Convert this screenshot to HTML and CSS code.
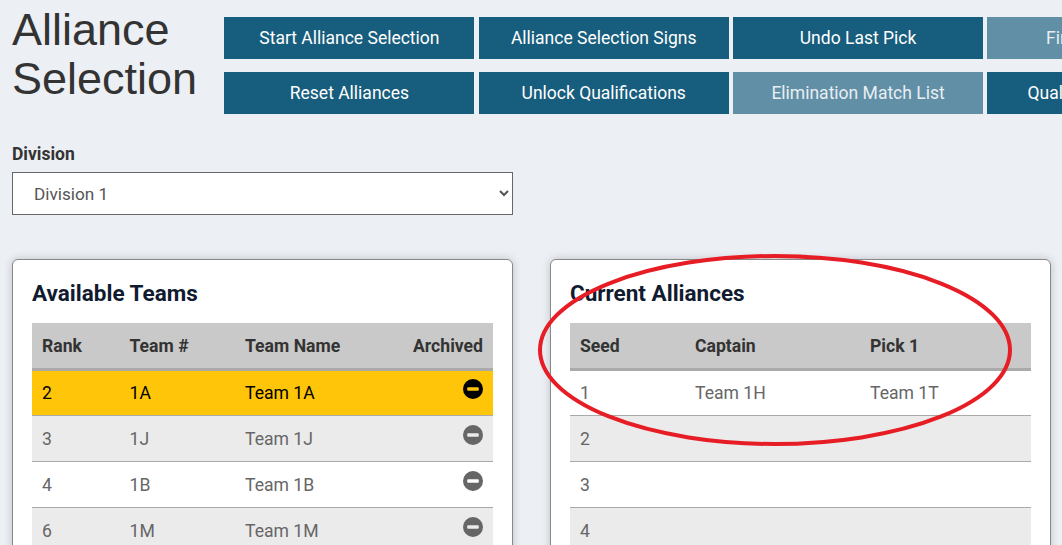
FILE: index.html
```html
<!DOCTYPE html>
<html lang="en">
<head>
<meta charset="utf-8">
<title>Alliance Selection</title>
<link rel="stylesheet" href="styles.css">
</head>
<body>
<header class="top">
  <h1 class="title">Alliance Selection</h1>
  <div class="actions">
    <a class="btn">Start Alliance Selection</a>
    <a class="btn">Alliance Selection Signs</a>
    <a class="btn">Undo Last Pick</a>
    <a class="btn off">Finals Match List</a>
    <a class="btn">Reset Alliances</a>
    <a class="btn">Unlock Qualifications</a>
    <a class="btn off">Elimination Match List</a>
    <a class="btn">Qualification Matches</a>
  </div>
</header>
<div class="field">
  <label class="field-label" for="division">Division</label>
  <select class="field-select" id="division"><option>Division 1</option></select>
</div>
<main class="cards">
  <section class="card">
    <h2 class="card-title">Available Teams</h2>
    <table class="data teams">
      <thead><tr><th>Rank</th><th>Team #</th><th>Team Name</th><th class="end">Archived</th></tr></thead>
      <tbody>
        <tr class="active"><td>2</td><td>1A</td><td>Team 1A</td><td class="end"><svg class="minus" viewBox="0 0 20 20"><path fill-rule="evenodd" d="M10 0a10 10 0 1 1 0 20a10 10 0 1 1 0-20zM5.2 8.2a1 1 0 0 0-1 1v1.6a1 1 0 0 0 1 1h9.6a1 1 0 0 0 1-1v-1.600a1 1 0 0 0-1-1z"/></svg></td></tr>
        <tr><td>3</td><td>1J</td><td>Team 1J</td><td class="end"><svg class="minus" viewBox="0 0 20 20"><path fill-rule="evenodd" d="M10 0a10 10 0 1 1 0 20a10 10 0 1 1 0-20zM5.2 8.2a1 1 0 0 0-1 1v1.6a1 1 0 0 0 1 1h9.6a1 1 0 0 0 1-1v-1.600a1 1 0 0 0-1-1z"/></svg></td></tr>
        <tr><td>4</td><td>1B</td><td>Team 1B</td><td class="end"><svg class="minus" viewBox="0 0 20 20"><path fill-rule="evenodd" d="M10 0a10 10 0 1 1 0 20a10 10 0 1 1 0-20zM5.2 8.2a1 1 0 0 0-1 1v1.6a1 1 0 0 0 1 1h9.6a1 1 0 0 0 1-1v-1.600a1 1 0 0 0-1-1z"/></svg></td></tr>
        <tr><td>6</td><td>1M</td><td>Team 1M</td><td class="end"><svg class="minus" viewBox="0 0 20 20"><path fill-rule="evenodd" d="M10 0a10 10 0 1 1 0 20a10 10 0 1 1 0-20zM5.2 8.2a1 1 0 0 0-1 1v1.6a1 1 0 0 0 1 1h9.6a1 1 0 0 0 1-1v-1.600a1 1 0 0 0-1-1z"/></svg></td></tr>
      </tbody>
    </table>
  </section>
  <section class="card">
    <h2 class="card-title">Current Alliances</h2>
    <table class="data alliances">
      <thead><tr><th>Seed</th><th>Captain</th><th>Pick 1</th></tr></thead>
      <tbody>
        <tr><td>1</td><td>Team 1H</td><td>Team 1T</td></tr>
        <tr><td>2</td><td></td><td></td></tr>
        <tr><td>3</td><td></td><td></td></tr>
        <tr><td>4</td><td></td><td></td></tr>
      </tbody>
    </table>
  </section>
</main>
<svg class="annotation" viewBox="0 0 1062 545" aria-hidden="true">
  <ellipse cx="775" cy="350" rx="235" ry="94"/>
</svg>
</body>
</html>
```
FILE: styles.css
```css
* { box-sizing: border-box; }
html, body { height: 545px; overflow: hidden; }
body {
  margin: 0;
  padding: 5px 0 0 12px;
  background: #eceff4;
  font-family: Roboto, "Liberation Sans", sans-serif;
  color: #333;
  position: relative;
}
.top { display: flex; align-items: flex-start; width: 1400px; }
.title {
  margin: 0;
  width: 212.400px;
  flex: none;
  font: 400 45px/49px "Liberation Sans", Arial, sans-serif;
  color: #333;
}
.actions {
  display: grid;
  grid-template-columns: repeat(4, 250px);
  gap: 13px 4.330px;
  margin-top: 12px;
}
.btn {
  height: 42px;
  display: flex;
  align-items: center;
  justify-content: center;
  background: #175d7d;
  color: #fff;
  font-size: 17.500px;
  white-space: nowrap;
}
.btn.off { background: #618fa6; color: #e8eef2; }
.field { margin-top: 30px; width: 501px; }
.field-label { display: block; font-size: 17.500px; font-weight: 700; line-height: 20px; color: #333; }
.field-select {
  display: block;
  width: 100%;
  height: 43px;
  margin-top: 8px;
  padding: 0 17px;
  border: 1px solid #666;
  border-radius: 0;
  background-color: #fff;
  color: #555;
  font: 400 17.200px Roboto, sans-serif;
}
.cards { display: flex; gap: 37px; margin-top: 44px; }
.card {
  flex: none;
  width: 501px;
  height: 400px;
  padding: 20px 19px;
  background: #fff;
  border: 1px solid #888;
  border-radius: 6px;
  box-shadow: 0 0 8px rgba(0, 0, 0, .2);
}
.card-title { margin: 0 0 17px; font-size: 22.500px; line-height: 26px; font-weight: 700; color: #101b30; }
.data { width: 461px; border-collapse: collapse; table-layout: fixed; font-size: 17.600px; }
.data th, .data td { padding: 0 10px; text-align: left; }
.data th { height: 46px; padding-top: 2px; background: #c9c9c9; border-bottom: 3px solid #aaa; color: #333; font-weight: 700; }
.data td { height: 46px; padding-top: 1px; border-bottom: 1px solid #aaa; color: #666; }
.data tbody tr:nth-child(even) td { background: #ebebeb; }
.data .end { text-align: right; }
.data tr.active td { background: #ffc609; color: #000; }
.teams th:nth-child(1) { width: 87.500px; }
.teams th:nth-child(2) { width: 115.500px; }
.teams th:nth-child(3) { width: 150px; }
.alliances th:nth-child(1) { width: 115px; }
.alliances th:nth-child(2) { width: 175px; }
.minus { display: block; width: 20px; height: 20px; margin: -8px 0 0 auto; fill: #666; }
.active .minus { fill: #000; }
.annotation { position: absolute; left: 0; top: 0; width: 1062px; height: 545px; pointer-events: none; }
.annotation ellipse { fill: none; stroke: #e71d25; stroke-width: 4; }
```
